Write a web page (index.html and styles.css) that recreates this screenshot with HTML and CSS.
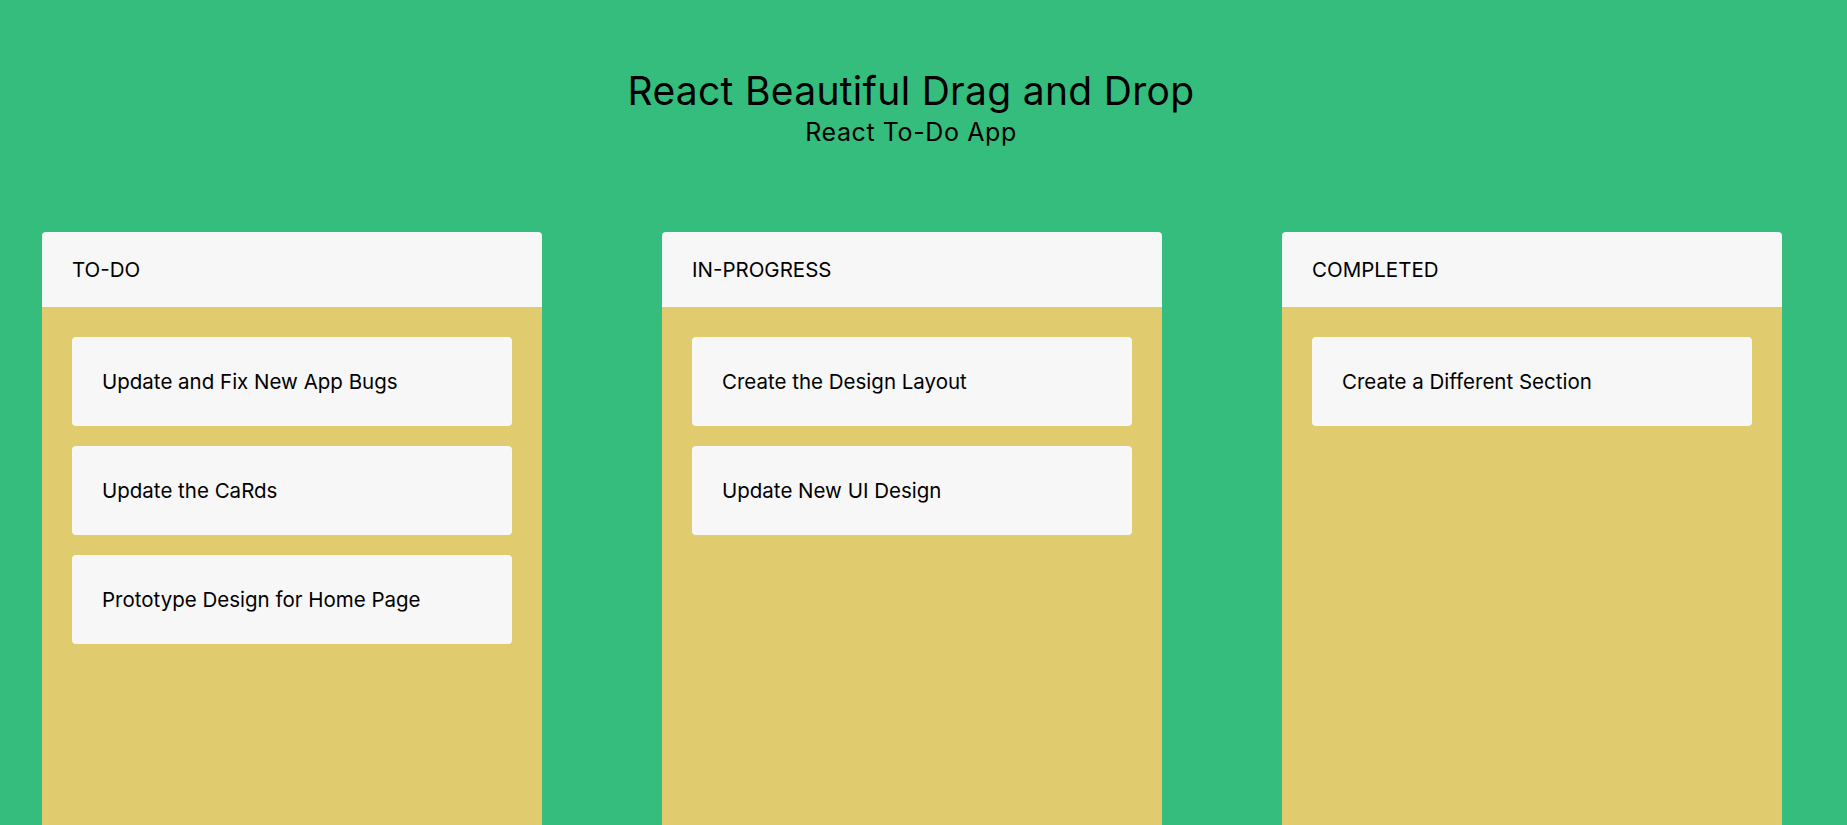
FILE: index.html
```html
<!DOCTYPE html>
<html lang="en">
<head>
<meta charset="utf-8">
<title>React Beautiful Drag and Drop</title>
<link rel="stylesheet" href="styles.css">
</head>
<body>
<div class="app">
  <header class="heading">
    <h1 class="title">React Beautiful Drag and Drop</h1>
    <h2 class="subtitle">React To-Do App</h2>
  </header>
  <main class="board">
    <section class="column">
      <div class="column-header">TO-DO</div>
      <div class="column-body">
        <div class="card">Update and Fix New App Bugs</div>
        <div class="card">Update the CaRds</div>
        <div class="card">Prototype Design for Home Page</div>
      </div>
    </section>
    <section class="column">
      <div class="column-header">IN-PROGRESS</div>
      <div class="column-body">
        <div class="card">Create the Design Layout</div>
        <div class="card">Update New UI Design</div>
      </div>
    </section>
    <section class="column">
      <div class="column-header">COMPLETED</div>
      <div class="column-body">
        <div class="card">Create a Different Section</div>
      </div>
    </section>
  </main>
</div>
</body>
</html>
```
FILE: styles.css
```css
* { box-sizing: border-box; }
html, body {
  margin: 0;
  padding: 0;
  height: 100%;
  overflow: hidden;
}
body {
  background: #34bd7d;
  font-family: Inter, "Open Sans", sans-serif;
  color: #000;
}
.app {
  display: flex;
  flex-direction: column;
  margin-right: 25px;
}
.heading {
  display: flex;
  flex-direction: column;
  align-items: center;
  padding-top: 68px;
}
.title {
  margin: 0;
  font-size: 39px;
  font-weight: 400;
  line-height: 46px;
  letter-spacing: 0.3px;
}
.subtitle {
  margin: 3px 0 0;
  font-size: 25px;
  font-weight: 400;
  line-height: 30px;
  letter-spacing: 0.6px;
}
.board {
  display: flex;
  gap: 120px;
  padding-left: 42px;
  margin-top: 85px;
}
.column {
  width: 500px;
  flex: none;
  display: flex;
  flex-direction: column;
}
.column-header {
  height: 75px;
  background: #f7f7f7;
  border-radius: 4px 4px 0 0;
  padding: 0 30px;
  display: flex;
  align-items: center;
  font-size: 20.5px;
}
.column-body {
  background: #e0cb6e;
  padding: 30px;
  min-height: 700px;
  display: flex;
  flex-direction: column;
  gap: 20px;
}
.card {
  height: 89px;
  background: #f7f7f7;
  border-radius: 4px;
  padding: 0 30px;
  display: flex;
  align-items: center;
  font-size: 20.5px;
}
```
